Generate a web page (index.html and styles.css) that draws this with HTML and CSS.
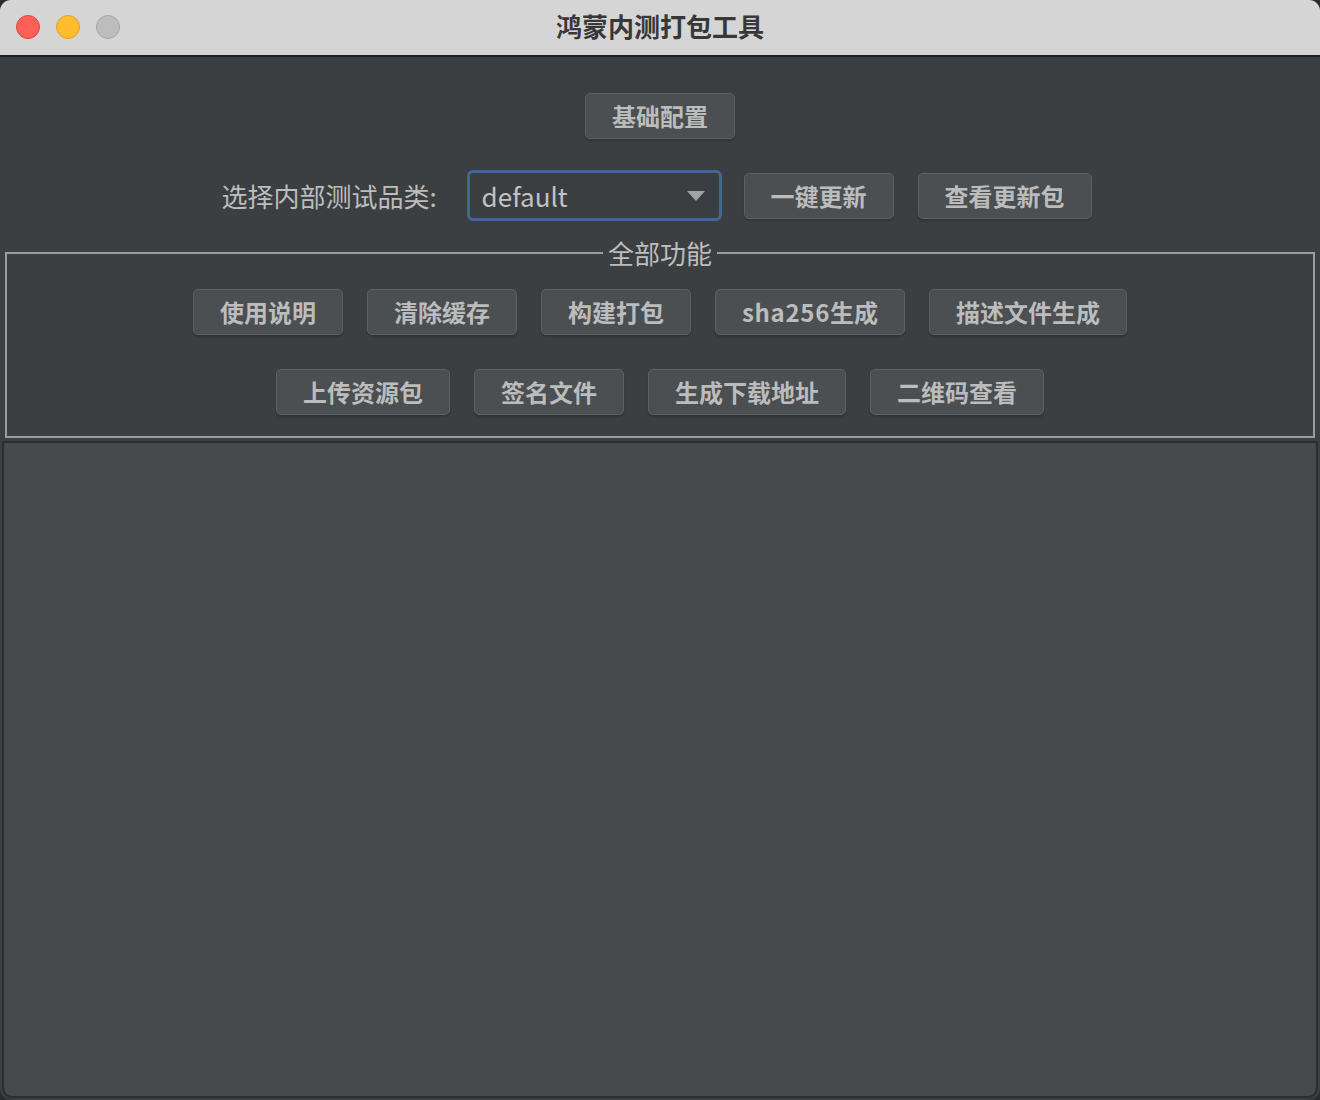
FILE: index.html
```html
<!DOCTYPE html>
<html lang="zh-CN">
<head>
<meta charset="utf-8">
<title>鸿蒙内测打包工具</title>
<link rel="stylesheet" href="styles.css">
</head>
<body>
<div class="window">
  <header class="titlebar">
    <div class="lights">
      <span class="light red"></span>
      <span class="light yellow"></span>
      <span class="light gray"></span>
    </div>
    <div class="title">鸿蒙内测打包工具</div>
  </header>
  <main class="content">
    <div class="row top-row">
      <button class="btn">基础配置</button>
    </div>
    <div class="row select-row">
      <label class="label">选择内部测试品类:</label>
      <div class="combo">
        <span class="combo-text">default</span>
        <svg class="combo-arrow" width="18" height="10" viewBox="0 0 18 10"><path d="M0 0 H18 L9 10 Z" fill="#a3a3a3"/></svg>
      </div>
      <button class="btn">一键更新</button>
      <button class="btn">查看更新包</button>
    </div>
    <fieldset class="group">
      <legend class="group-title">全部功能</legend>
      <div class="row btn-row first">
        <button class="btn">使用说明</button>
        <button class="btn">清除缓存</button>
        <button class="btn">构建打包</button>
        <button class="btn"><span class="latin">sha256</span>生成</button>
        <button class="btn">描述文件生成</button>
      </div>
      <div class="row btn-row second">
        <button class="btn">上传资源包</button>
        <button class="btn">签名文件</button>
        <button class="btn">生成下载地址</button>
        <button class="btn">二维码查看</button>
      </div>
    </fieldset>
    <div class="output"></div>
  </main>
</div>
</body>
</html>
```
FILE: styles.css
```css
* { box-sizing: border-box; }
html, body { margin: 0; padding: 0; background: #2a2b2c; }
body { width: 1320px; height: 1100px; font-family: "Noto Sans CJK SC", "Noto Sans", sans-serif; }

.window {
  width: 1320px;
  height: 1100px;
  display: flex;
  flex-direction: column;
  background: #3c3f41;
  border-radius: 11px;
  overflow: hidden;
}

.titlebar {
  height: 57px;
  flex: none;
  background: #d5d5d5;
  border-bottom: 2px solid #1f2021;
  display: flex;
  align-items: center;
  position: relative;
}
.lights { display: flex; gap: 16px; padding-left: 16px; padding-bottom: 1px; }
.light { width: 24px; height: 24px; border-radius: 50%; display: block; }
.red { background: #fe5f57; border: 1px solid #e1463f; }
.yellow { background: #febc2e; border: 1px solid #dfa125; }
.gray { background: #bdbdbd; border: 1px solid #a5a5a5; }
.title {
  position: absolute;
  left: 0; right: 0; top: 0; bottom: 0;
  display: flex; align-items: center; justify-content: center;
  font-size: 26px; font-weight: 700; color: #383838;
  padding-bottom: 5px;
}

.content { flex: 1; display: flex; flex-direction: column; padding-top: 36px; }

.row { display: flex; justify-content: center; align-items: center; }

.btn {
  height: 46px;
  padding: 0 26px;
  background: #4b4f51;
  border: 1px solid #5d6163;
  border-radius: 5px;
  box-shadow: 0 2px 2px rgba(0,0,0,0.18);
  color: #bcbcbc;
  font-family: "Noto Sans CJK SC", "Noto Sans", sans-serif;
  font-size: 24px;
  font-weight: 700;
  line-height: 1;
}
.latin { letter-spacing: 0.7px; }

.select-row { margin-top: 31px; gap: 22px; padding-right: 7px; }
.select-row .btn:last-child { margin-left: 2px; }
.label { font-size: 26px; color: #bdbdbd; margin-right: 8px; }
.combo {
  width: 255px; height: 51px;
  border: 3px solid #426891;
  border-radius: 6px;
  background: #3b3e40;
  display: flex; align-items: center; justify-content: space-between;
  padding: 0 14px 0 12px;
}
.combo-text { font-size: 26px; color: #c2c2c2; padding-bottom: 1px; }
.combo-arrow { margin-top: 1px; }

.group {
  margin: 17px 5px 0;
  padding: 0 0 21px;
  border: 2px solid #9c9c9c;
  min-width: 0;
}
.group-title {
  margin: 0 auto;
  padding: 0 5px;
  font-size: 26px;
  line-height: 30px;
  color: #bdbdbd;
}
.btn-row { gap: 24px; }
.btn-row.first { margin-top: 21px; }
.btn-row.second { margin-top: 34px; }

.output {
  flex: 1;
  margin: 3px 2px 2px;
  background: #45494a;
  border: 2px solid #2b2d2e;
  border-radius: 0 0 10px 10px;
}
```
